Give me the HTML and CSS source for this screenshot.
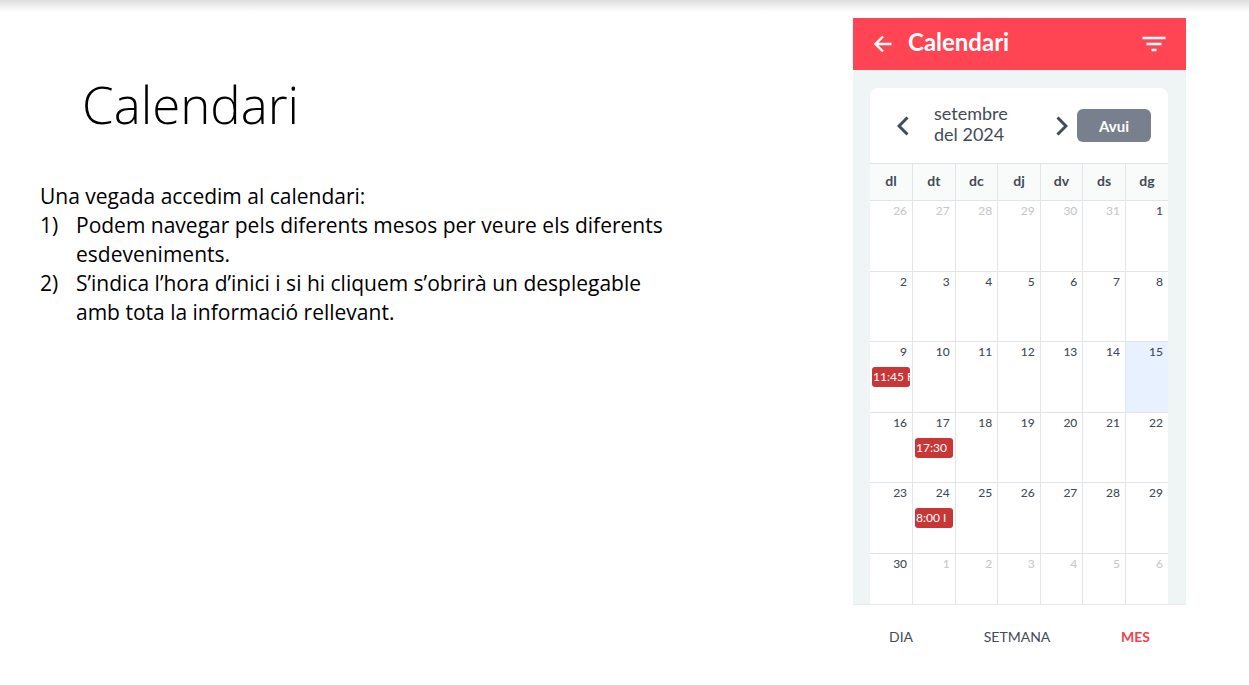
FILE: index.html
```html
<!DOCTYPE html>
<html lang="ca">

<head>
    <meta charset="UTF-8">
    <meta name="viewport" content="width=device-width, initial-scale=1">
    <title>Calendari</title>
    <link rel="stylesheet" href="styles.css">
</head>

<body>
    <main class="slide">
        <section class="notes">
            <h1>Calendari</h1>
            <p>Una vegada accedim al calendari:</p>
            <ol>
                <li>Podem navegar pels diferents mesos per veure els diferents esdeveniments.</li>
                <li>S’indica l’hora d’inici i si hi cliquem s’obrirà un desplegable amb tota la informació rellevant.</li>
            </ol>
        </section>

        <section class="phone">
            <header class="app-bar">
                <button type="button" class="icon-btn" aria-label="Enrere">
                    <svg width="18" height="18" viewBox="0 0 18 18">
                        <path d="M9 1.5L1.5 9L9 16.5M1.5 9H17.5" />
                    </svg>
                </button>
                <h2>Calendari</h2>
                <button type="button" class="icon-btn" aria-label="Filtra">
                    <svg width="24" height="18" viewBox="0 0 24 18">
                        <path d="M0.5 3H23.5M4.5 9H19.5M9.500 15H14.500" />
                    </svg>
                </button>
            </header>

            <div class="screen">
                <div class="card">
                    <div class="toolbar">
                        <button type="button" class="icon-btn dark" aria-label="Mes anterior">
                            <svg width="12" height="20" viewBox="0 0 12 20">
                                <path d="M10.500 1.5L2 10L10.500 18.5" />
                            </svg>
                        </button>
                        <h3>setembre del 2024</h3>
                        <button type="button" class="icon-btn dark" aria-label="Mes següent">
                            <svg width="12" height="20" viewBox="0 0 12 20">
                                <path d="M1.500 1.5L10 10L1.500 18.5" />
                            </svg>
                        </button>
                        <button type="button" class="today-btn">Avui</button>
                    </div>

                    <table>
                        <thead>
                            <tr>
                                <th>dl</th>
                                <th>dt</th>
                                <th>dc</th>
                                <th>dj</th>
                                <th>dv</th>
                                <th>ds</th>
                                <th>dg</th>
                            </tr>
                        </thead>
                        <tbody>
                            <tr>
                                <td class="other">26</td>
                                <td class="other">27</td>
                                <td class="other">28</td>
                                <td class="other">29</td>
                                <td class="other">30</td>
                                <td class="other">31</td>
                                <td>1</td>
                            </tr>
                            <tr>
                                <td>2</td>
                                <td>3</td>
                                <td>4</td>
                                <td>5</td>
                                <td>6</td>
                                <td>7</td>
                                <td>8</td>
                            </tr>
                            <tr>
                                <td>9<button type="button" class="event">11:45 F</button></td>
                                <td>10</td>
                                <td>11</td>
                                <td>12</td>
                                <td>13</td>
                                <td>14</td>
                                <td class="today">15</td>
                            </tr>
                            <tr>
                                <td>16</td>
                                <td>17<button type="button" class="event">17:30</button></td>
                                <td>18</td>
                                <td>19</td>
                                <td>20</td>
                                <td>21</td>
                                <td>22</td>
                            </tr>
                            <tr>
                                <td>23</td>
                                <td>24<button type="button" class="event">8:00 I</button></td>
                                <td>25</td>
                                <td>26</td>
                                <td>27</td>
                                <td>28</td>
                                <td>29</td>
                            </tr>
                            <tr class="last">
                                <td>30</td>
                                <td class="other">1</td>
                                <td class="other">2</td>
                                <td class="other">3</td>
                                <td class="other">4</td>
                                <td class="other">5</td>
                                <td class="other">6</td>
                            </tr>
                        </tbody>
                    </table>
                </div>
            </div>

            <nav class="tabs">
                <button type="button">DIA</button>
                <button type="button">SETMANA</button>
                <button type="button" class="active">MES</button>
            </nav>
        </section>
    </main>
</body>

</html>
```

FILE: styles.css
```css
* {
    box-sizing: border-box;
}

body {
    margin: 0;
    min-height: 100vh;
    background: linear-gradient(#dedede, #ffffff 12px) no-repeat #ffffff;
    color: #000000;
    font-family: Lato, sans-serif;
}

h1,
h2,
h3,
p,
ol {
    margin: 0;
    font-weight: normal;
}

button {
    border: 0;
    padding: 0;
    background: none;
    font-family: inherit;
    cursor: pointer;
}

.slide {
    display: flex;
    justify-content: space-between;
    gap: 40px;
    padding: 18px 63px 0 40px;
}

/* left side text */
.notes {
    flex: 0 1 630px;
    padding-top: 52px;
    font-family: "Open Sans", sans-serif;
    font-size: 21px;
    line-height: 29px;
}

.notes h1 {
    margin: 0 0 44px 42px;
    font-size: 51px;
    font-weight: 300;
    line-height: 68px;
}

.notes ol {
    padding: 0;
    list-style: none;
    counter-reset: step;
}

.notes li {
    display: flex;
    counter-increment: step;
}

.notes li::before {
    content: counter(step) ")";
    flex: 0 0 36px;
}

/* phone app */
.phone {
    flex: 0 0 333px;
    color: #434b57;
}

.app-bar {
    display: flex;
    align-items: center;
    gap: 16px;
    height: 52px;
    padding: 0 20px 0 21px;
    background-color: #ff4553;
    color: #ffffff;
}

.app-bar h2 {
    flex: 1;
    padding-bottom: 4px;
    font-size: 24px;
    font-weight: bold;
    line-height: 28px;
}

.icon-btn {
    display: flex;
    color: inherit;
}

.icon-btn svg {
    fill: none;
    stroke: currentColor;
    stroke-width: 2.4;
}

.dark svg {
    stroke-width: 3;
}

.screen {
    padding: 18px 18px 0 17px;
    background-color: #eff5f5;
    border-bottom: 1px solid #e6eaeb;
}

.card {
    overflow: hidden;
    border-radius: 8px 8px 0 0;
    background-color: #ffffff;
}

.toolbar {
    display: flex;
    align-items: center;
    height: 75px;
    padding: 0 17px 0 27px;
}

.toolbar h3 {
    flex: 1;
    padding: 0 28px 4px 25px;
    font-size: 18px;
    line-height: 21px;
}

.today-btn {
    width: 74px;
    height: 33px;
    margin-left: 9px;
    border-radius: 6px;
    background-color: #77808c;
    color: #ffffff;
    font-size: 15px;
    font-weight: bold;
}

table {
    width: 100%;
    table-layout: fixed;
    border-collapse: collapse;
}

th,
td {
    border: 1px solid #e1e5ea;
    padding: 0;
}

th:first-child,
td:first-child {
    border-left: 0;
}

th:last-child,
td:last-child {
    border-right: 0;
}

th {
    height: 37px;
    padding-bottom: 4px;
    background-color: #f9fbfb;
    font-size: 14px;
    font-weight: bold;
}

td {
    height: 71px;
    padding: 1px 5px 0 2px;
    vertical-align: top;
    text-align: right;
    font-size: 12px;
    font-weight: 500;
    line-height: 18px;
}

tr:nth-child(even) td {
    height: 70px;
}

tr.last td {
    height: 50px;
    border-bottom: 0;
}

.other {
    color: #c6c8cb;
}

.today {
    background-color: #e7f1ff;
}

.event {
    display: block;
    width: 38px;
    height: 20px;
    margin-top: 6px;
    padding: 0 0 2px 1px;
    overflow: hidden;
    border-radius: 3px;
    background-color: #c93636;
    color: #ffffff;
    font-size: 12px;
    text-align: left;
    white-space: nowrap;
}

.tabs {
    display: flex;
    justify-content: space-between;
    padding: 23px 36px;
}

.tabs button {
    color: #434b57;
    font-size: 14px;
    line-height: 18px;
}

.tabs .active {
    color: #f04352;
    font-weight: bold;
}
```
